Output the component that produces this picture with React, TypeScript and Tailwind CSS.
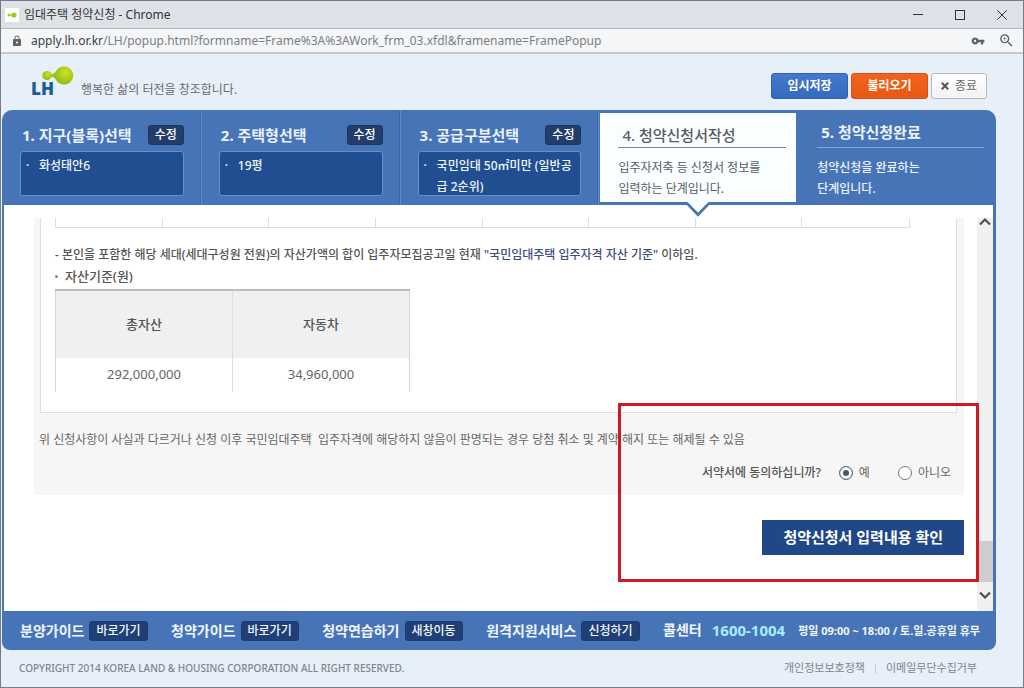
import type { ReactNode } from "react";
import { MdLock, MdVpnKey, MdZoomIn } from "react-icons/md";

const KOREAN = "font-['Noto_Sans','Noto_Sans_CJK_KR',sans-serif]";

function TitleBar() {
  return (
    <div className="flex h-7 items-center border-b border-[#b4b6ba] bg-[#dee1e7] pl-1">
      <svg viewBox="0 0 14 14" className="size-[14px]" aria-hidden="true">
        <rect width="14" height="14" fill="#fff" />
        <circle cx="4" cy="7" r="1.5" fill="#a8c81e" />
        <circle cx="9" cy="7" r="2.6" fill="#a8c81e" />
        <path d="M4 6.5h4v1H4z" fill="#a8c81e" />
      </svg>
      <span className="ml-[5px] text-xs text-[#333]">임대주택 청약신청 - Chrome</span>
      <div className="ml-auto flex items-center gap-[22px] pr-[11px] text-[#333]">
        <button type="button" aria-label="최소화" className="flex size-5 items-center justify-center">
          <svg viewBox="0 0 10 10" className="size-[10px]" aria-hidden="true">
            <path d="M0 4.500h10" stroke="currentColor" />
          </svg>
        </button>
        <button type="button" aria-label="최대화" className="flex size-5 items-center justify-center">
          <svg viewBox="0 0 10 10" className="size-[10px]" aria-hidden="true">
            <rect x=".5" y=".5" width="9" height="9" fill="none" stroke="currentColor" />
          </svg>
        </button>
        <button type="button" aria-label="닫기" className="flex size-5 items-center justify-center">
          <svg viewBox="0 0 10 10" className="size-[10px]" aria-hidden="true">
            <path d="M.3.3l9.4 9.4M9.7.3L.3 9.7" stroke="currentColor" fill="none" />
          </svg>
        </button>
      </div>
    </div>
  );
}

function AddressBar() {
  return (
    <div className="flex h-[25px] items-center border-b-2 border-[#c5cacf] bg-[#f4f6f8] pr-2 pl-[10px] text-[#5f6368]">
      <MdLock className="size-3" />
      <span className="ml-2 text-xs text-[#7b7f84]">
        <span className="text-[#3c4043]">apply.lh.or.kr</span>
        /LH/popup.html?formname=Frame%3A%3AWork_frm_03.xfdl&amp;framename=FramePopup
      </span>
      <MdVpnKey className="ml-auto size-[14px]" />
      <MdZoomIn className="ml-[13px] size-[17px]" />
    </div>
  );
}

function Logo() {
  return (
    <div className="flex items-start">
      <svg viewBox="0 0 44 40" className="h-10 w-11" role="img" aria-label="LH">
        <defs>
          <radialGradient id="leaf" cx=".6" cy=".35" r=".7">
            <stop offset="0" stopColor="#d2e21c" />
            <stop offset="1" stopColor="#86bb1c" />
          </radialGradient>
        </defs>
        <path d="M16 7.500C21 9.500 24 8 28 4L28 15C24 11 21 9.500 16 11.500Z" fill="#9dc61c" />
        <circle cx="17" cy="9.500" r="4.600" fill="url(#leaf)" />
        <circle cx="34" cy="9.500" r="9.200" fill="url(#leaf)" />
        <text x="1" y="29" fontSize="17" fontWeight="900" fill="#1b5c9f">
          LH
        </text>
      </svg>
      <span className="mt-4 ml-[7px] text-xs leading-4 text-[#666b72]">행복한 삶의 터전을 창조합니다.</span>
    </div>
  );
}

function PageHeader() {
  return (
    <header className="flex h-14 items-start justify-between pt-3 pr-9 pl-[29px]">
      <Logo />
      <div className="flex gap-[3px] pt-[7px] text-xs font-bold">
        <button type="button" className="h-[26px] w-[77px] rounded-[3px] border border-[#2f62ad] bg-linear-to-b from-[#4579cd] to-[#346abd] text-white">
          임시저장
        </button>
        <button type="button" className="h-[26px] w-[77px] rounded-[3px] border border-[#d8500f] bg-linear-to-b from-[#f0641c] to-[#ea5811] text-white">
          불러오기
        </button>
        <button type="button" className="flex h-[26px] w-14 items-center justify-center gap-[6px] rounded-[3px] border border-[#b5b8bb] bg-linear-to-b from-white to-[#f3f3f3] font-normal text-[#666]">
          <svg viewBox="0 0 8 8" className="size-2" aria-hidden="true">
            <path d="M.8.8l6.400 6.400M7.200.8L.8 7.200" stroke="#555" strokeWidth="2" />
          </svg>
          종료
        </button>
      </div>
    </header>
  );
}

function DoneStep({ title, children }: { title: string; children: ReactNode }) {
  return (
    <li className="flex flex-col gap-[6px] border-r border-r-[#3c68a7] pt-[15px] pr-4 pl-[18px] shadow-[1px_0_0_#5f8bc8]">
      <div className="flex h-5 items-center justify-between pl-[2px]">
        <h2 className="text-[15px] leading-5 font-bold text-[#e9f3fb]">{title}</h2>
        <button type="button" className="h-5 w-9 rounded-[3px] border border-[#1d355e] bg-[#223d6b] text-xs leading-4 font-medium text-white">
          수정
        </button>
      </div>
      <div className="flex h-[45px] rounded-[3px] border border-[#6391cf] bg-[#214e90] pt-[3px] text-xs leading-[21px] font-medium text-[#edf5fc]">
        <span className="w-[18px] shrink-0 pl-[5px]">·</span>
        <span className="break-all">{children}</span>
      </div>
    </li>
  );
}

function Steps() {
  return (
    <ol className="grid h-[95px] grid-cols-5 rounded-t-[10px] bg-[#4774b7]">
      <DoneStep title="1. 지구(블록)선택">화성태안6</DoneStep>
      <DoneStep title="2. 주택형선택">19평</DoneStep>
      <DoneStep title="3. 공급구분선택">국민임대 50㎡미만 (일반공급 2순위)</DoneStep>
      <li className="relative z-10 my-[3px] mr-px ml-[2px] bg-[#fafeff] px-[18px] pt-3 text-[#555c66]" aria-current="step">
        <h2 className="mr-[-8px] border-b border-[#7c8798] pb-[2px] pl-1 text-[15px] leading-5 font-medium">4. 청약신청서작성</h2>
        <p className="pt-[9px] text-xs leading-[21px]">
          입주자저축 등 신청서 정보를
          <br />
          입력하는 단계입니다.
        </p>
        <svg viewBox="0 0 28 16" className="absolute top-full left-1/2 h-4 w-7 -translate-x-1/2" aria-hidden="true">
          <path d="M2 0L14 12.500L26 0" fill="#fafeff" stroke="#4774b7" strokeWidth="3" />
          <path d="M2.500-1h23L14 10.500z" fill="#fafeff" />
        </svg>
      </li>
      <li className="pt-3 pr-3 pl-5 text-[#e9f3fb]">
        <h2 className="border-b border-[#83a7da] pb-[5px] pl-1 text-[15px] leading-5 font-bold">5. 청약신청완료</h2>
        <p className="pt-[9px] text-xs leading-[21px] font-medium">
          청약신청을 완료하는
          <br />
          단계입니다.
        </p>
      </li>
    </ol>
  );
}

function Assets() {
  return (
    <section className="mr-[7px] ml-[6px] border border-t-0 border-[#dedede] bg-white pb-5 pl-[14px] text-[#555]">
      <div className="mr-[46px] grid h-[10px] grid-cols-8 divide-x divide-[#ddd] border border-t-0 border-[#ddd]">
        {Array.from({ length: 8 }, (_, i) => (
          <div key={i} />
        ))}
      </div>
      <p className="pt-[17px] text-xs leading-5 font-medium">
        - 본인을 포함한 해당 세대(세대구성원 전원)의 자산가액의 합이 입주자모집공고일 현재{" "}
        <span className="text-[#3f4c82]">"국민임대주택 입주자격 자산 기준"</span> 이하임.
      </p>
      <h3 className="flex items-center gap-[7px] pt-px text-[13px] leading-5 font-medium">
        <span className="size-[3px] rounded-full bg-[#888]" />
        자산기준(원)
      </h3>
      <table className="mt-[3px] w-[355px] table-fixed border-collapse border-x border-t-2 border-x-[#d4d4d4] border-t-[#bcbcbc] text-center text-[13px]">
        <thead>
          <tr className="h-[68px] bg-[#f0f0f0]">
            <th scope="col" className="border-r border-[#ddd] font-medium">총자산</th>
            <th scope="col" className="font-medium">자동차</th>
          </tr>
        </thead>
        <tbody>
          <tr className="h-[34px] text-[#666]">
            <td className="border-r border-[#ddd]">292,000,000</td>
            <td>34,960,000</td>
          </tr>
        </tbody>
      </table>
    </section>
  );
}

const RADIO =
  "size-[14px] appearance-none rounded-full border border-[#777] bg-white checked:border-[#45779b] checked:bg-[#555] checked:shadow-[inset_0_0_0_3px_white]";

function Pledge() {
  return (
    <div className="px-[5px] pt-[17px] pb-3 text-xs leading-5 text-[#666]">
      <p className="whitespace-pre-wrap">
        위 신청사항이 사실과 다르거나 신청 이후 국민임대주택{"  "}입주자격에 해당하지 않음이 판명되는 경우 당첨 취소 및 계약 해지 또는 해제될 수 있음
      </p>
      <div role="radiogroup" aria-labelledby="pledge-question" className="mt-[13px] flex items-center justify-end pr-2">
        <span id="pledge-question" className="font-medium text-[#555]">
          서약서에 동의하십니까?
        </span>
        <label className="ml-[18px] flex items-center gap-[6px]">
          <input type="radio" name="agree" defaultChecked className={RADIO} />예
        </label>
        <label className="ml-7 flex items-center gap-[6px]">
          <input type="radio" name="agree" className={RADIO} />
          아니오
        </label>
      </div>
    </div>
  );
}

function Scrollbar() {
  return (
    <div className="flex w-4 shrink-0 flex-col items-center bg-[#f0f0f0]">
      <button type="button" aria-label="위로" className="flex h-4 w-full items-start justify-center">
        <svg viewBox="0 0 12 8" className="h-2 w-3" aria-hidden="true">
          <path d="M1 6.500l5-5 5 5" fill="none" stroke="#505050" strokeWidth="2.200" />
        </svg>
      </button>
      <div className="mt-auto h-[41px] w-full bg-[#cdcdcd]" />
      <button type="button" aria-label="아래로" className="mt-[5px] mb-2 flex h-4 w-full items-center justify-center">
        <svg viewBox="0 0 12 8" className="h-2 w-3" aria-hidden="true">
          <path d="M1 1.500l5 5 5-5" fill="none" stroke="#505050" strokeWidth="2.200" />
        </svg>
      </button>
    </div>
  );
}

function Content() {
  return (
    <main className="relative flex grow border-r-3 border-l-2 border-r-[#4774b7] border-l-[#5276a6] bg-white pt-[13px]">
      <div className="grow pr-[13px] pl-[30px]">
        <div className="bg-[#f6f6f6]">
          <Assets />
          <Pledge />
        </div>
        <div className="flex justify-end pt-[25px]">
          <button type="button" className="h-[35px] bg-[#204788] px-[21px] text-[15px] font-bold text-white">
            청약신청서 입력내용 확인
          </button>
        </div>
      </div>
      <Scrollbar />
      <div className="pointer-events-none absolute right-[14px] bottom-[29px] h-[179px] w-[361px] border-3 border-[#cb1b20]" />
    </main>
  );
}

function QuickLink({ label, action }: { label: string; action: string }) {
  return (
    <div className="flex items-center gap-[5px]">
      <span className="font-bold">{label}</span>
      <button type="button" className="h-5 rounded-[3px] border border-[#1c3b70] bg-[#203f74] px-[6px] text-xs leading-4 font-medium">
        {action}
      </button>
    </div>
  );
}

function ServiceBar() {
  return (
    <div className="flex h-[39px] items-center justify-between rounded-b-[8px] bg-[#4774b7] pr-4 pl-[18px] text-sm whitespace-nowrap text-[#eff7fd]">
      <QuickLink label="분양가이드" action="바로가기" />
      <QuickLink label="청약가이드" action="바로가기" />
      <QuickLink label="청약연습하기" action="새창이동" />
      <QuickLink label="원격지원서비스" action="신청하기" />
      <div className="flex items-center font-bold">
        <span>콜센터</span>
        <span className="ml-[10px] text-[15px] text-[#a4edff]">1600-1004</span>
        <span className="ml-[13px] text-[11px]">평일 09:00 ~ 18:00 / 토.일.공휴일 휴무</span>
      </div>
    </div>
  );
}

function PageFooter() {
  return (
    <footer className="flex h-[37px] items-center justify-between pr-[46px] pl-[18px] text-[11px] text-[#7f858c]">
      <span className="text-[10px] font-medium">COPYRIGHT 2014 KOREA LAND &amp; HOUSING CORPORATION ALL RIGHT RESERVED.</span>
      <nav className="flex items-center gap-[10px]">
        <a href="#privacy">개인정보보호정책</a>
        <span className="h-[10px] w-px bg-[#c8ccd2]" />
        <a href="#email">이메일무단수집거부</a>
      </nav>
    </footer>
  );
}

export default function App() {
  return (
    <div className={`${KOREAN} flex min-h-screen flex-col border border-[#777b83] bg-[#e7eff8]`}>
      <TitleBar />
      <AddressBar />
      <PageHeader />
      <div className="mr-[27px] ml-px flex grow flex-col">
        <Steps />
        <Content />
        <ServiceBar />
      </div>
      <PageFooter />
    </div>
  );
}
